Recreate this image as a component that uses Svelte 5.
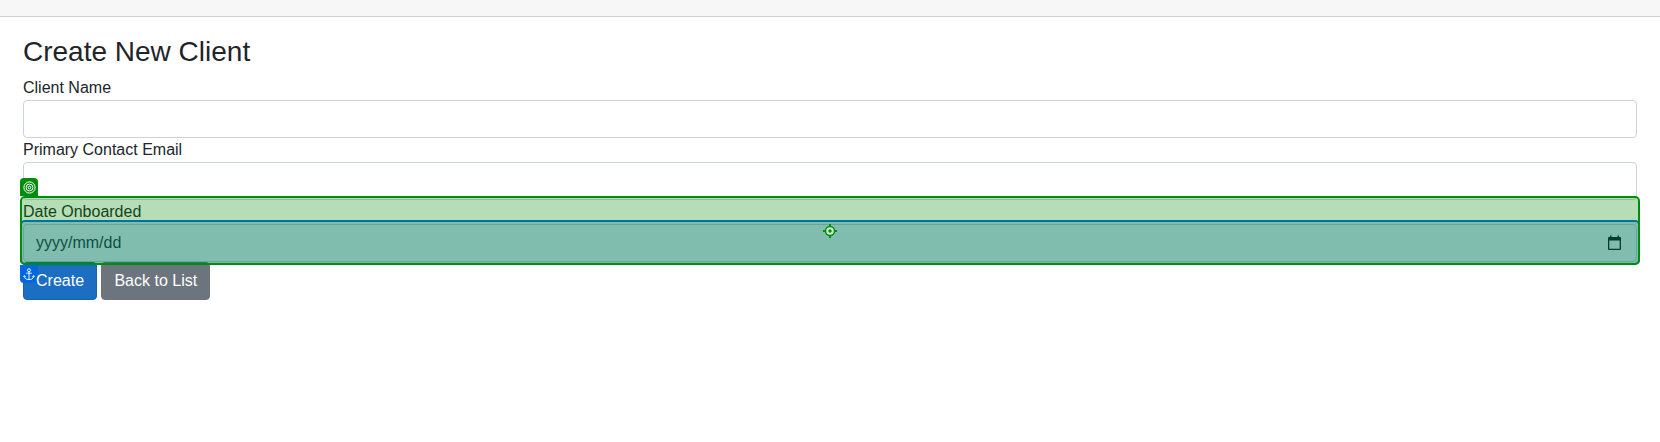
<script>
  const fields = ['Client Name', 'Primary Contact Email'];
</script>

<div class="page">
  <header></header>
  <main>
    <h3>Create New Client</h3>
    {#each fields as label}
      <div class="group">
        <span class="label">{label}</span>
        <div class="control"></div>
      </div>
    {/each}
    <div class="group">
      <span class="label">Date Onboarded</span>
      <div class="control date">
        <span>yyyy/mm/dd</span>
        <svg width="13" height="16" viewBox="0 0 13 16">
          <path fill="#000" fill-rule="evenodd" d="M2 .5h1.500V2h6V.5H11V2h1q1 0 1 1v11q0 1-1 1H1q-1 0-1-1V3q0-1 1-1h1zM1.300 5.500v8.200h10.400V5.500z" />
        </svg>
      </div>
      <div class="anchor-box">
        <span class="tab">
          <svg width="12" height="13" viewBox="0 0 12 14" fill="none" stroke="#fff" stroke-width="1">
            <circle cx="6" cy="2.400" r="1.600" />
            <path d="M6 4v8.500M3 5.600h6M1 8.200v1.100C1.400 11.500 3.500 12.500 6 12.500s4.600-1 5-3.200V8.200M0 9.600l1-1.400 1.500 1.200M12 9.600l-1-1.400-1.500 1.200" />
          </svg>
        </span>
      </div>
      <div class="target-box">
        <span class="tab">
          <svg width="13" height="13" viewBox="0 0 13 13" fill="none" stroke="#fff" stroke-width="1">
            <circle cx="6.500" cy="6.500" r="5.600" />
            <circle cx="6.500" cy="6.500" r="3.400" />
            <circle cx="6.500" cy="6.500" r="1.300" />
          </svg>
        </span>
        <svg class="center" width="14" height="14" viewBox="0 0 14 14">
          <circle cx="7" cy="7" r="4.500" fill="#cfe9d5" stroke="#008d0d" stroke-width="1.500" />
          <circle cx="7" cy="7" r="1.700" fill="#008d0d" />
          <path d="M7 0v3M7 11v3M0 7h3M11 7h3" stroke="#008d0d" stroke-width="2" />
        </svg>
      </div>
    </div>
    <div class="actions">
      <button class="primary"><span>Create</span></button>
      <button class="secondary">Back to List</button>
    </div>
  </main>
</div>

<style>
  :global(body) { margin: 0; background: #fff; }
  .page {
    height: 442px;
    font: 16px/24px "Liberation Sans", Arial, sans-serif;
    color: #212529;
  }
  header {
    box-sizing: border-box;
    height: 17px;
    background: #f7f7f7;
    border-bottom: 1px solid #d0d0d0;
  }
  main { padding: 18px 23px 0; }
  h3 { margin: 0 0 7px; font-size: 28px; font-weight: 400; line-height: 34px; }
  .group { position: relative; }
  .label { display: block; height: 24px; }
  .control {
    box-sizing: border-box;
    height: 38px;
    border: 1px solid #ced4da;
    border-radius: 4px;
    background: #fff;
  }
  .date { display: flex; align-items: center; justify-content: space-between; padding: 0 15px 0 12px; }
  .target-box, .anchor-box {
    position: absolute;
    box-sizing: border-box;
    left: -3px;
    right: -3px;
    bottom: -3px;
    border-radius: 5px;
  }
  .target-box { z-index: 2; top: -4px; border: 2px solid #008d0d; background: rgba(0, 140, 4, .29); background-clip: padding-box; }
  .anchor-box { z-index: 1; top: 20px; border: 2px solid #0067e0; background: rgba(0, 98, 222, .29); background-clip: padding-box; }
  .tab {
    position: absolute;
    left: -2px;
    width: 18px;
    display: flex;
    align-items: center;
    justify-content: center;
  }
  .target-box .tab { top: -20px; height: 18px; background: #008d0d; border-radius: 4px 4px 0 0; }
  .anchor-box .tab { bottom: -20px; height: 18px; background: #0067e0; border-radius: 0 0 0 4px; }
  .center { position: absolute; left: 801px; top: 26px; }
  .actions { display: flex; gap: 4.400px; }
  button {
    box-sizing: border-box;
    height: 38px;
    padding: 0 12px;
    border: 1px solid;
    border-radius: 4px;
    font: inherit;
    color: #fff;
  }
  .primary { background: #1b6ec2; border-color: #1861ac; }
  .primary span { position: relative; z-index: 3; }
  .secondary { background: #6c757d; border-color: #6c757d; }
</style>
